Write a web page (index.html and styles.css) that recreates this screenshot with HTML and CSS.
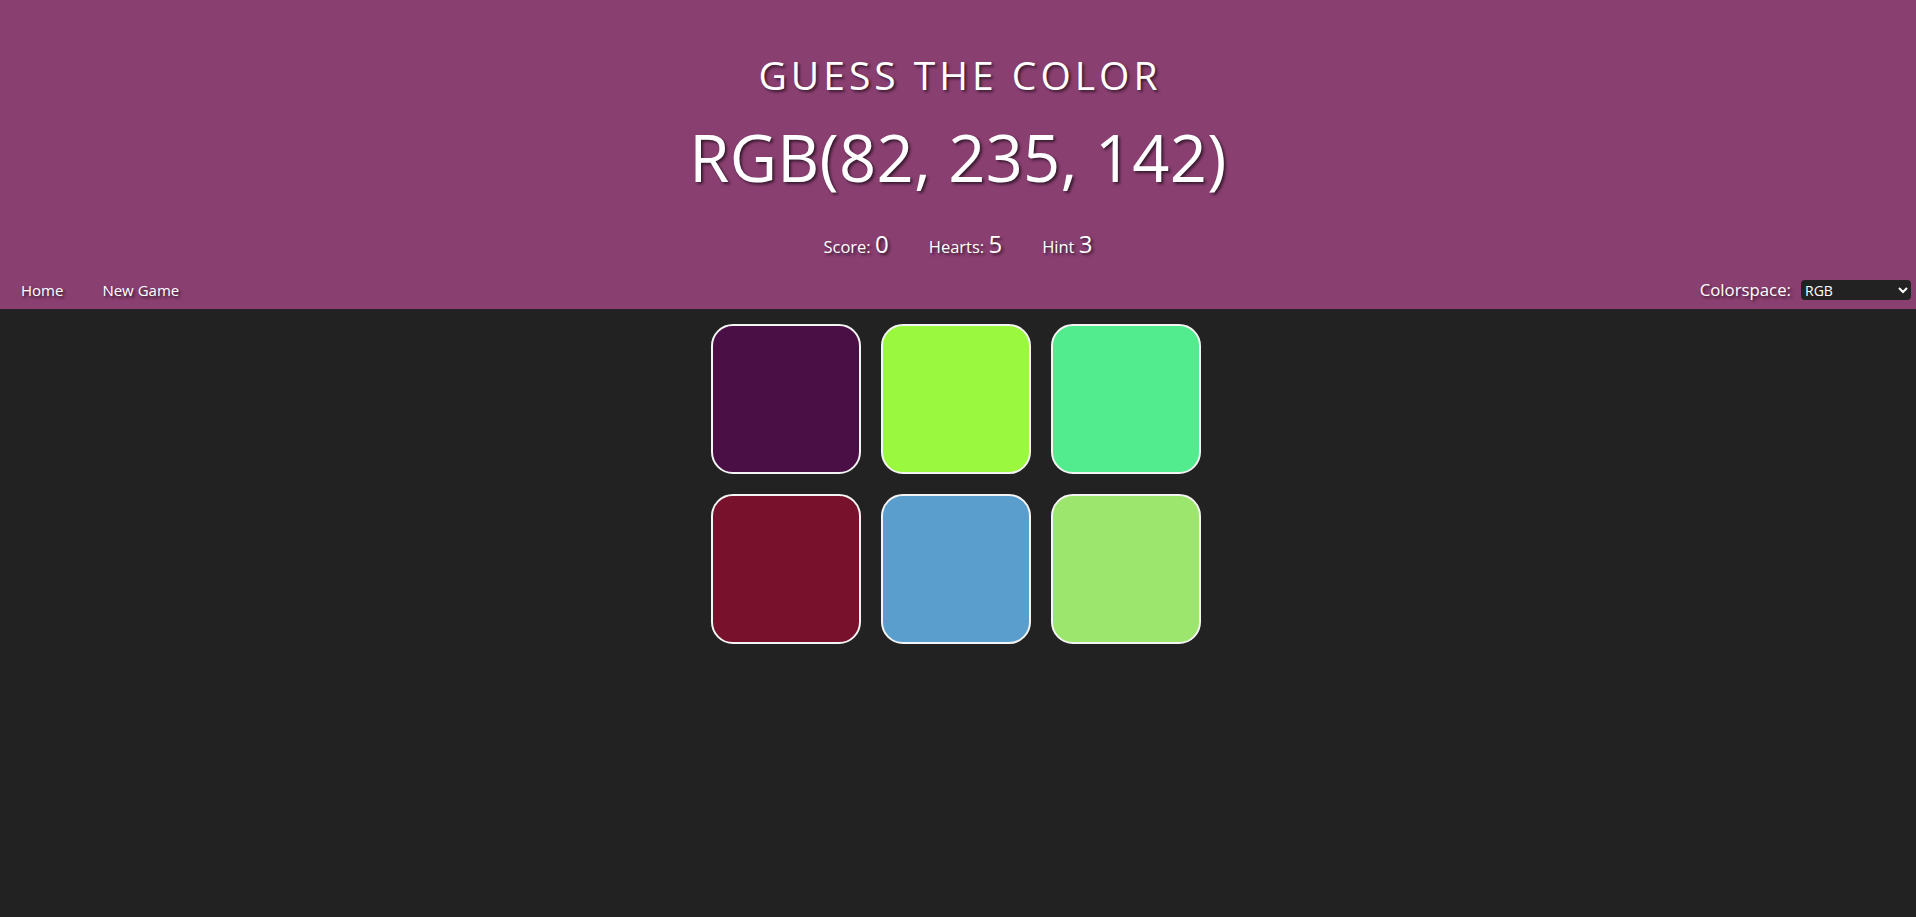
FILE: index.html
```html
<!DOCTYPE html>
<html lang="en">
<head>
<meta charset="utf-8">
<title>Guess the Color</title>
<link rel="stylesheet" href="styles.css">
</head>
<body>
<header class="header">
  <h1 class="title">GUESS THE COLOR</h1>
  <h2 class="target">RGB(82, 235, 142)</h2>
  <div class="stats">
    <span class="stat">Score: <span class="stat-val">0</span></span>
    <span class="stat">Hearts: <span class="stat-val">5</span></span>
    <span class="stat">Hint <span class="stat-val">3</span></span>
  </div>
  <nav class="nav">
    <div class="nav-links">
      <a class="nav-link" href="#">Home</a>
      <a class="nav-link" href="#">New Game</a>
    </div>
    <label class="colorspace">Colorspace:
      <select class="select">
        <option>RGB</option>
        <option>HEX</option>
        <option>HSL</option>
      </select>
    </label>
  </nav>
</header>
<main class="board">
  <div class="grid">
    <div class="tile" style="background:#4a0f44"></div>
    <div class="tile" style="background:#9af93f"></div>
    <div class="tile" style="background:#52eb8e"></div>
    <div class="tile" style="background:#78122c"></div>
    <div class="tile" style="background:#5a9ecd"></div>
    <div class="tile" style="background:#9de66e"></div>
  </div>
</main>
</body>
</html>
```

FILE: styles.css
```css
html, body {
  margin: 0;
  padding: 0;
  background: #222222;
  font-family: "Open Sans", "DejaVu Sans", sans-serif;
  color: #fff;
  height: 100%;
}

.header {
  background: #8a3f71;
  text-align: center;
  text-shadow: 2px 2px 3px rgba(0, 0, 0, 0.6);
}

.title {
  margin: 0;
  padding: 50px 0 0 4px;
  font-size: 39px;
  font-weight: 400;
  line-height: 50px;
  letter-spacing: 4px;
}

.target {
  margin: 12px 0 0;
  font-size: 65px;
  font-weight: 400;
  line-height: 90px;
  letter-spacing: 0.3px;
}

.stats {
  display: flex;
  justify-content: center;
  gap: 40px;
  padding-top: 30px;
  font-size: 16.5px;
  line-height: 30px;
}

.stat-val {
  font-size: 24px;
  line-height: 1;
}

.nav {
  display: flex;
  justify-content: space-between;
  align-items: center;
  height: 20px;
  padding: 18px 5px 9px 21px;
  font-size: 15px;
  line-height: 20px;
}

.nav-links {
  display: flex;
  gap: 39px;
}

.nav-link {
  color: #fff;
  text-decoration: none;
}

.colorspace {
  display: flex;
  align-items: center;
  gap: 10px;
  font-size: 16.8px;
}

.select {
  width: 110px;
  height: 20px;
  background: #222;
  color: #fff;
  border: none;
  border-radius: 4px;
  font-family: inherit;
  font-size: 14px;
}

.board {
  display: flex;
  justify-content: center;
  padding-top: 15px;
}

.grid {
  display: grid;
  grid-template-columns: repeat(3, 150px);
  gap: 20px;
  margin-left: -5px;
}

.tile {
  width: 150px;
  height: 150px;
  box-sizing: border-box;
  border: 2px solid #f4f4f4;
  border-radius: 22px;
}
```
